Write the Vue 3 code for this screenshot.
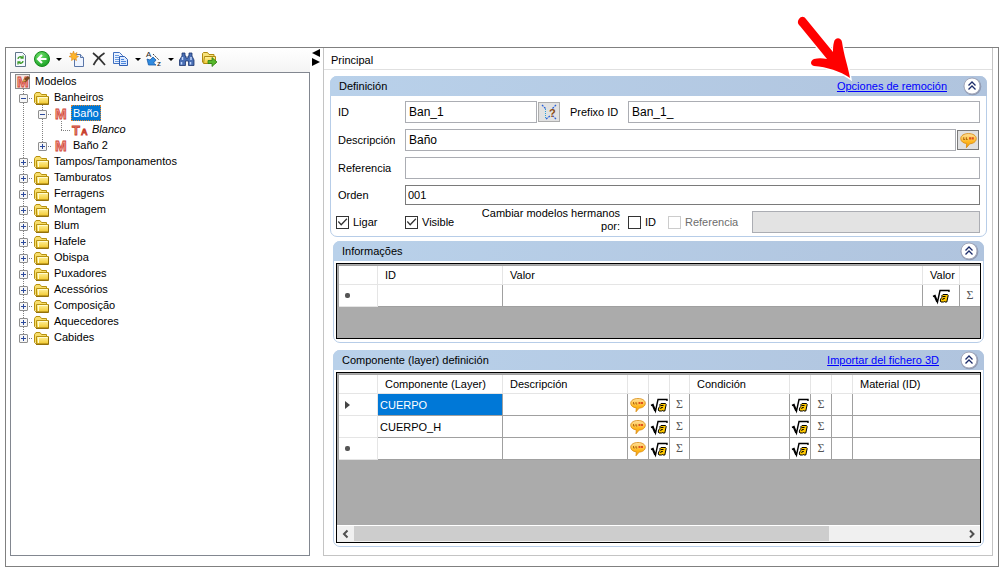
<script setup>
import { ref } from 'vue'

const tree = [
  { label: 'Modelos', icon: 'root', cells: [] },
  { label: 'Banheiros', icon: 'folder', cells: ['minus'] },
  { label: 'Baño', icon: 'model', cells: ['line', 'minus'], selected: true },
  { label: 'Blanco', icon: 'text', cells: ['line', 'line', 'end'], italic: true },
  { label: 'Baño 2', icon: 'model', cells: ['line', 'plus-end'] },
  { label: 'Tampos/Tamponamentos', icon: 'folder', cells: ['plus'] },
  { label: 'Tamburatos', icon: 'folder', cells: ['plus'] },
  { label: 'Ferragens', icon: 'folder', cells: ['plus'] },
  { label: 'Montagem', icon: 'folder', cells: ['plus'] },
  { label: 'Blum', icon: 'folder', cells: ['plus'] },
  { label: 'Hafele', icon: 'folder', cells: ['plus'] },
  { label: 'Obispa', icon: 'folder', cells: ['plus'] },
  { label: 'Puxadores', icon: 'folder', cells: ['plus'] },
  { label: 'Acessórios', icon: 'folder', cells: ['plus'] },
  { label: 'Composição', icon: 'folder', cells: ['plus'] },
  { label: 'Aquecedores', icon: 'folder', cells: ['plus'] },
  { label: 'Cabides', icon: 'folder', cells: ['plus-end'] }
]

const layers = [
  { name: 'CUERPO', mark: 'current', selected: true },
  { name: 'CUERPO_H', mark: '' },
  { name: '', mark: 'new' }
]

const id = ref('Ban_1')
const prefix = ref('Ban_1_')
const description = ref('Baño')
const reference = ref('')
const order = ref('001')
const link = ref(true)
const visible = ref(true)
const byId = ref(false)
</script>

<template>
  <svg class="defs" aria-hidden="true">
    <defs>
      <linearGradient id="gold" x1="0" y1="0" x2="0" y2="1">
        <stop offset="0" stop-color="#fff3a0" />
        <stop offset="1" stop-color="#f2c930" />
      </linearGradient>
      <linearGradient id="amber" x1="0" y1="0" x2="0" y2="1">
        <stop offset="0" stop-color="#ffe2a0" />
        <stop offset="0.6" stop-color="#ffb61c" />
        <stop offset="1" stop-color="#f5a000" />
      </linearGradient>
      <radialGradient id="green" cx="0.4" cy="0.3" r="0.8">
        <stop offset="0" stop-color="#6fe06a" />
        <stop offset="1" stop-color="#0f9a1c" />
      </radialGradient>
      <symbol id="balloon" viewBox="0 0 16 16">
        <path d="M8 1.500c4.200 0 7.300 1.900 7.300 4.700S12.500 11 9.200 11.100L6 14.800l.3-3.900C3 10.500.7 8.800.7 6.200.7 3.400 3.800 1.500 8 1.500z" fill="url(#amber)" stroke="#d98a10" stroke-width=".8" />
        <path d="M3.500 5v2h1.200M6 5v2h1.200" fill="none" stroke="#b06a10" />
        <path d="M8.500 6h2M11 6h2" stroke="#e0501c" stroke-width="2" />
      </symbol>
      <symbol id="root-a" viewBox="0 0 18 18">
        <path d="M1 9.500l2-1L5.500 15 8 3.500h9V5" fill="none" stroke="#000" stroke-width="1.400" />
        <path d="M2.500 9l2.500 6" fill="none" stroke="#000" stroke-width="1.600" />
        <path d="M9.500 9l1.500-1.500h4.500l.7 1-1.400 6.500h-2l-.3-.5-1 .5H9l-.7-1 .5-2.500L10.500 10z" fill="#ffc800" stroke="#000" />
        <path d="M11 9.500h2.500M10.700 13l.5-1.500h1.600" fill="none" stroke="#000" />
      </symbol>
      <symbol id="chevrons" viewBox="0 0 20 20">
        <circle cx="10.500" cy="10.500" r="8.800" fill="#7d849c" opacity=".7" />
        <circle cx="10" cy="10" r="8" fill="#fff" stroke="#a4a9bc" />
        <path d="M6.500 9.500L10 6l3.500 3.500M6.500 13.500L10 10l3.500 3.500" fill="none" stroke="#1c2c6a" stroke-width="1.300" />
      </symbol>
      <symbol id="folder" viewBox="0 0 17 16">
        <path d="M1.500 12.500v-8L3 2.500h4l1.500 2h5v3" fill="#f7dd6a" stroke="#b8920f" />
        <path d="M3.500 13.500v-7h12v7.200H3L1.500 12.500" fill="url(#gold)" stroke="#b8920f" />
        <path d="M5.500 13V7.500h9" fill="none" stroke="#fffbd0" />
        <path d="M15.500 7v7.500H3" fill="none" stroke="#94700a" />
      </symbol>
    </defs>
  </svg>

  <div class="window">
    <aside class="side">
      <div class="toolbar">
        <button class="tool" aria-label="Actualizar">
          <svg width="18" height="18" viewBox="0 0 18 18">
            <path d="M4.500 2.500h7l3 3v11h-10z" fill="#f4f8ff" stroke="#5f7488" />
            <path d="M7 9c0-2 3-3 4-1.500M12 5.500V8H9.500M12 11c0 2-3 3-4 1.500M7 14.500V12h2.500" fill="none" stroke="#3c9a28" stroke-width="1.300" />
          </svg>
        </button>
        <button class="tool wide back" aria-label="Atrás">
          <svg width="18" height="18" viewBox="0 0 18 18">
            <circle cx="9" cy="9" r="7.500" fill="url(#green)" stroke="#168a1c" />
            <path d="M13.500 9H5.500M9 5L5 9l4 4" fill="none" stroke="#fff" stroke-width="2.200" />
          </svg>
          <i class="caret"></i>
        </button>
        <button class="tool" aria-label="Nuevo">
          <svg width="18" height="18" viewBox="0 0 18 18">
            <path d="M6.500 4.500h6l3 3v9h-9z" fill="#eef4ff" stroke="#5a76a8" />
            <path d="M12.500 4.500v3h3" fill="#cfdcf2" stroke="#5a76a8" />
            <path d="M5.500 1l1 3 2.500-1.500L8 5.500l2.500 1L8 8l.5 2.500-2.500-1.500-2.500 1.500.3-3L1 6.500l2.500-1L2 3l2.500.8z" fill="#ffb528" stroke="#d8841c" stroke-width=".6" />
          </svg>
        </button>
        <button class="tool" aria-label="Eliminar">
          <svg width="18" height="18" viewBox="0 0 18 18">
            <path d="M3 3c4 3 8 7 12 12M14.500 3C10 6 6 10 3.500 15" fill="none" stroke="#333" stroke-width="1.700" />
          </svg>
        </button>
        <button class="tool wide" aria-label="Copiar">
          <svg width="18" height="18" viewBox="0 0 18 18">
            <path d="M1.500 2.500h6l3 3v8h-9z" fill="#eaf2ff" stroke="#3f6fc0" />
            <path d="M3 5.500h4M3 7.500h5M3 9.500h5M3 11.500h5" stroke="#6a9be0" />
            <path d="M7.500 6.500h5l3 3v6h-8z" fill="#dbe9ff" stroke="#2f5fb4" />
            <path d="M9 9.500h3M9 11.500h5M9 13.500h5" stroke="#4c86dc" />
          </svg>
          <i class="caret"></i>
        </button>
        <button class="tool wide" aria-label="Ordenar">
          <svg width="18" height="18" viewBox="0 0 18 18">
            <text x="1" y="7" class="tiny">A</text>
            <text x="12" y="16" class="tiny">z</text>
            <path d="M8 4l6 6" stroke="#444" stroke-dasharray="2 1" />
            <path d="M2 9l3 1 3-3 3 3-2.500 3L11 15H3.500z" fill="#2f8be0" stroke="#1a5ca8" stroke-width=".8" />
          </svg>
          <i class="caret"></i>
        </button>
        <button class="tool" aria-label="Buscar">
          <svg width="18" height="18" viewBox="0 0 18 18">
            <path d="M4 3h3v3h1v2h2V6h1V3h3v3l2 4v5.500h-5.500V11h-3v4.500H1.500V10L4 6z" fill="#4a6fb4" stroke="#1c356e" stroke-width=".8" />
            <path d="M4.500 7v3M3.500 12v2.500M13 7v3M12.500 12v2.500" stroke="#c4d8fc" stroke-width="1.500" />
          </svg>
        </button>
        <button class="tool" aria-label="Mover a carpeta">
          <svg width="18" height="18" viewBox="0 0 18 18">
            <path d="M2.500 12.500v-9l1-1h4l1.500 2h5v3" fill="#f7e27a" stroke="#b08a10" />
            <path d="M4.500 6.500h11v7h-12z" fill="url(#gold)" stroke="#b08a10" />
            <path d="M8 10.500h4v-3l5 4.500-5 4.500v-3H8z" fill="#56b82c" stroke="#2f7d14" stroke-width=".8" />
          </svg>
        </button>
      </div>

      <ul class="tree">
        <li v-for="node in tree" :key="node.label" class="node">
          <svg v-for="(cell, i) in node.cells" :key="i" width="19" height="16" viewBox="0 0 19 16">
            <path v-if="cell.endsWith('end')" d="M9.500 0v9" class="dots" />
            <path v-else d="M9.500 0v16" class="dots" />
            <path v-if="cell !== 'line'" d="M9 9.500h10" class="dots" />
            <template v-if="cell.startsWith('plus') || cell === 'minus'">
              <rect x="5.500" y="5.500" width="8" height="8" rx=".5" fill="#f6f6f6" stroke="#8f8f8f" />
              <path d="M7 9.500h5" stroke="#2c4a9c" />
              <path v-if="cell !== 'minus'" d="M9.500 7v5" stroke="#2c4a9c" />
            </template>
          </svg>
          <span class="pic">
            <svg v-if="node.icon === 'folder'" width="17" height="16"><use href="#folder" /></svg>
            <svg v-else-if="node.icon === 'root'" width="17" height="16" viewBox="0 0 17 16">
              <rect x="1.500" y=".5" width="14" height="14" fill="#f2e6e2" stroke="#8b8b8b" />
              <text x="3" y="13" class="m-glyph">M</text>
              <path d="M8 8l2-3 4-3 2 2-4 4z" fill="#7a4a20" />
              <path d="M8 8l2-3 2 2z" fill="#e8a850" />
            </svg>
            <svg v-else-if="node.icon === 'model'" width="17" height="16" viewBox="0 0 17 16">
              <text x="3" y="13" class="m-glyph">M</text>
            </svg>
            <svg v-else width="17" height="16" viewBox="0 0 17 16">
              <text x="1" y="13" class="t-glyph">T</text>
              <text x="10" y="13" class="t-glyph small">A</text>
            </svg>
          </span>
          <span class="name" :class="{ selected: node.selected, italic: node.italic }">{{ node.label }}</span>
        </li>
      </ul>
    </aside>

    <div class="splitter" aria-hidden="true">
      <svg width="13" height="18" viewBox="0 0 13 18">
        <path d="M10 0v8L2 4z M2 9v8l8-4z" fill="#000" />
      </svg>
    </div>

    <main class="main">
      <h1 class="tab">Principal</h1>

      <div class="cards">
        <section class="card first">
          <header class="bar">
            <h2>Definición</h2>
            <a href="#remocion">Opciones de remoción</a>
            <button class="fold" aria-label="Contraer"><svg width="20" height="20"><use href="#chevrons" /></svg></button>
          </header>
          <div class="form">
            <div class="row">
              <label class="lab" for="f-id">ID</label>
              <input id="f-id" v-model="id" class="box id-box" type="text" />
              <button class="side-btn" aria-label="Sugerir ID">
                <svg width="18" height="18" viewBox="0 0 18 18">
                  <path d="M2 2l4 4M16 2l-4 4M16 16l-3-3M6 16l4-3" stroke="#2a62d8" stroke-width="1.300" stroke-dasharray="2 1" />
                  <path d="M5.500 6v9" stroke="#2aa0d8" stroke-dasharray="1 1" />
                  <text x="9" y="14" class="question">?</text>
                </svg>
              </button>
              <label class="prefix" for="f-prefix">Prefixo ID</label>
              <input id="f-prefix" v-model="prefix" class="box grow" type="text" />
            </div>
            <div class="row">
              <label class="lab" for="f-desc">Descripción</label>
              <input id="f-desc" v-model="description" class="box grow" type="text" />
              <button class="side-btn framed" aria-label="Traducciones"><svg width="17" height="17"><use href="#balloon" /></svg></button>
            </div>
            <div class="row">
              <label class="lab" for="f-ref">Referencia</label>
              <input id="f-ref" v-model="reference" class="box grow" type="text" />
            </div>
            <div class="row">
              <label class="lab" for="f-order">Orden</label>
              <input id="f-order" v-model="order" class="box grow order" type="text" />
            </div>
            <div class="row checks">
              <label class="check link"><input v-model="link" type="checkbox" />Ligar</label>
              <label class="check shown"><input v-model="visible" type="checkbox" />Visible</label>
              <span class="siblings">Cambiar modelos hermanos por:</span>
              <label class="check by-id"><input v-model="byId" type="checkbox" />ID</label>
              <label class="check by-ref"><input type="checkbox" disabled />Referencia</label>
              <input class="box grow" type="text" disabled aria-label="Referencia de modelos hermanos" />
            </div>
          </div>
        </section>

        <section class="card">
          <header class="bar">
            <h2>Informações</h2>
            <button class="fold" aria-label="Contraer"><svg width="20" height="20"><use href="#chevrons" /></svg></button>
          </header>
          <div class="grid info">
            <table>
              <colgroup>
                <col class="w39" /><col class="w125" /><col /><col class="w37" /><col class="w20" />
              </colgroup>
              <thead>
                <tr><th></th><th>ID</th><th>Valor</th><th>Valor</th><th></th></tr>
              </thead>
              <tbody>
                <tr>
                  <td class="head"><i class="star"></i></td>
                  <td></td>
                  <td></td>
                  <td class="mid"><svg width="18" height="18"><use href="#root-a" /></svg></td>
                  <td class="mid sum">Σ</td>
                </tr>
              </tbody>
            </table>
          </div>
        </section>

        <section class="card fill">
          <header class="bar">
            <h2>Componente (layer) definición</h2>
            <a href="#importar">Importar del fichero 3D</a>
            <button class="fold" aria-label="Contraer"><svg width="20" height="20"><use href="#chevrons" /></svg></button>
          </header>
          <div class="grid">
            <table>
              <colgroup>
                <col class="w39" /><col class="w125" /><col class="w125" /><col class="w21" /><col class="w21" /><col class="w20" />
                <col class="w100" /><col class="w21" /><col class="w21" /><col class="w21" /><col />
              </colgroup>
              <thead>
                <tr>
                  <th></th><th>Componente (Layer)</th><th>Descripción</th><th></th><th></th><th></th>
                  <th>Condición</th><th></th><th></th><th></th><th>Material (ID)</th>
                </tr>
              </thead>
              <tbody>
                <tr v-for="layer in layers" :key="layer.name">
                  <td class="head">
                    <i v-if="layer.mark === 'current'" class="current"></i>
                    <i v-if="layer.mark === 'new'" class="star"></i>
                  </td>
                  <td :class="{ selected: layer.selected }">{{ layer.name }}</td>
                  <td></td>
                  <td class="mid"><svg width="16" height="16"><use href="#balloon" /></svg></td>
                  <td class="mid"><svg width="18" height="18"><use href="#root-a" /></svg></td>
                  <td class="mid sum">Σ</td>
                  <td></td>
                  <td class="mid"><svg width="18" height="18"><use href="#root-a" /></svg></td>
                  <td class="mid sum">Σ</td>
                  <td></td>
                  <td></td>
                </tr>
              </tbody>
            </table>
            <div class="scroll">
              <button class="arrow" aria-label="Izquierda">
                <svg width="17" height="16" viewBox="0 0 17 16"><path d="M10.500 4.500L7 8l3.500 3.500" /></svg>
              </button>
              <div class="track"><div class="thumb"></div></div>
              <button class="arrow" aria-label="Derecha">
                <svg width="17" height="16" viewBox="0 0 17 16"><path d="M7 4.500L10.500 8 7 11.500" /></svg>
              </button>
            </div>
          </div>
        </section>
      </div>
    </main>

    <svg class="pointer" width="64" height="70" viewBox="0 0 64 70" aria-hidden="true">
      <path d="M5 6C3 9 4 11 6 13L33 46C28 45 24 45 20 46C16 48 16 52 20 53C33 54 46 58 56 65C54 53 50 43 48 29C47 24 41 24 40 29C39 32 39 36 39 39L12 6C10 3 7 3 5 6z" fill="red" stroke="#fff" stroke-width="3" paint-order="stroke" />
    </svg>
  </div>
</template>

<style>
body {
  background: #fff;
}
</style>

<style scoped>
.defs {
  position: absolute;
  width: 0;
  height: 0;
}

.window,
.window * {
  box-sizing: border-box;
}

.window {
  position: relative;
  display: flex;
  min-height: calc(100vh - 54px);
  margin: 47px 3px 7px 5px;
  padding: 0 5px 10px 4px;
  border: 1px solid #808080;
  font: 11px/16px "Liberation Sans", Arial, sans-serif;
  color: #000;
}

.window svg {
  display: block;
  flex: none;
}

button {
  padding: 0;
  border: 0;
  background: none;
  font: inherit;
}

.side {
  display: flex;
  flex: 0 0 300px;
  flex-direction: column;
}

.toolbar {
  display: flex;
  align-items: center;
  gap: 4px;
  height: 24px;
  padding: 0 1px 2px;
  background: linear-gradient(#fff, #f4f4f4);
}

.tool {
  display: flex;
  align-items: center;
}

.tool.wide {
  gap: 5px;
}

.tool.back {
  margin-right: 2px;
}

.caret {
  border: 3px solid transparent;
  border-top-color: #000;
  border-bottom: 0;
}

.tree {
  flex: 1;
  margin: 0;
  padding: 0 3px;
  border: 1px solid #828790;
  background: #fff;
  list-style: none;
}

.node {
  display: flex;
  height: 16px;
}

.dots {
  fill: none;
  stroke: #808080;
  stroke-dasharray: 1 1;
}

.pic {
  width: 19px;
  padding-top: 1px;
}

.name {
  padding: 0 2px;
}

.name.selected {
  outline: 1px dotted #e08a30;
  outline-offset: -1px;
  background: #0078d7;
  color: #fff;
}

.name.italic {
  font-style: italic;
}

.m-glyph {
  fill: #f6a496;
  stroke: #d0483c;
  stroke-width: 0.8px;
  font: bold 14px "Liberation Sans", Arial, sans-serif;
}

.t-glyph {
  fill: #e88a80;
  stroke: #c8402c;
  stroke-width: 0.8px;
  font: bold 13px "Liberation Sans", Arial, sans-serif;
}

.t-glyph.small {
  font-size: 9px;
}

.tiny {
  fill: #222;
  font: 8px "Liberation Sans", Arial, sans-serif;
}

.question {
  fill: #8a4a10;
  font: bold 11px "Liberation Sans", Arial, sans-serif;
}

.splitter {
  flex: 0 0 13px;
  padding-top: 1px;
}

.main {
  display: flex;
  flex: 1;
  flex-direction: column;
  min-width: 0;
  border: 1px solid #c4c4c4;
  border-top: 0;
}

.tab {
  height: 22px;
  margin: 0;
  padding: 4px 7px;
  border-bottom: 1px solid #e0e0e0;
  font-size: 11px;
  font-weight: normal;
}

.cards {
  display: flex;
  flex: 1;
  flex-direction: column;
  padding: 6px 5px 8px 6px;
}

.card {
  margin: 0 3px 7px;
  border: 1px solid #b7cde8;
  border-radius: 7px;
}

.card.first {
  margin: 0 0 4px;
}

.card.fill {
  display: flex;
  flex: 1;
  flex-direction: column;
  margin-bottom: 0;
}

.bar {
  display: flex;
  align-items: center;
  height: 20px;
  margin: -1px -1px 0;
  padding: 0 5px 0 9px;
  border-radius: 7px 7px 0 0;
  background: linear-gradient(90deg, #b9d1ea, #b0c4de);
}

.bar h2 {
  flex: 1;
  margin: 0;
  font-size: 11px;
  font-weight: normal;
}

.bar a {
  margin-right: 20px;
  color: #00f;
}

.first .bar a {
  margin-right: 15px;
}

.fold {
  height: 20px;
}

.form {
  display: flex;
  flex-direction: column;
  gap: 6px;
  padding: 5px 6px 3px 7px;
}

.row {
  display: flex;
  align-items: center;
}

.lab {
  flex: 0 0 67px;
}

.box {
  min-width: 0;
  height: 22px;
  padding: 0 3px;
  border: 1px solid #abadb3;
  border-radius: 0;
  background: #fff;
  color: #000;
  font: 12px "Liberation Sans", Arial, sans-serif;
}

.box.grow {
  flex: 1;
}

.box.id-box {
  width: 132px;
}

.box.order {
  height: 20px;
  padding: 0 2px;
  border-color: #7a7a7a;
  font-size: 11px;
}

.box:disabled {
  background: #e3e3e3;
}

.side-btn {
  display: grid;
  place-items: center;
  width: 22px;
  height: 20px;
  margin-left: 1px;
  border: 1px solid #adadad;
  background: #e1e1e1;
}

.side-btn.framed {
  margin-right: 1px;
  border-color: #7a7a7a;
}

.prefix {
  flex: 0 0 58px;
  margin-left: 10px;
}

.check {
  display: flex;
  flex: none;
  align-items: center;
  gap: 4px;
}

.check input {
  width: 13px;
  height: 13px;
  margin: 0;
  border: 1px solid #333;
  background: #fff;
  appearance: none;
}

.check input:checked::before {
  display: block;
  height: 11px;
  background: #333;
  clip-path: polygon(8% 50%, 16% 42%, 38% 66%, 86% 16%, 94% 24%, 38% 84%);
  content: "";
}

.check input:disabled {
  border-color: #ccc;
}

.checks {
  height: 22px;
  margin-left: -2px;
}

.link {
  width: 69px;
}

.shown {
  width: 66px;
}

.siblings {
  width: 149px;
  margin-right: 8px;
  margin-bottom: 4px;
  line-height: 13px;
  text-align: right;
}

.by-id {
  width: 40px;
}

.by-ref {
  width: 84px;
  color: #6d6d6d;
}

.grid {
  display: flex;
  flex: 1;
  flex-direction: column;
  margin: 2px;
  padding: 1px 0 0 1px;
  border: 1px solid #000;
  background: #ababab;
}

.card.fill .grid {
  margin-bottom: 3px;
}

.grid.info {
  min-height: 76px;
  margin-bottom: 3px;
}

table {
  width: 100%;
  border-top: 1px solid #a0a0a0;
  border-left: 1px solid #a0a0a0;
  border-spacing: 0;
  background: #fff;
  table-layout: fixed;
}

th {
  height: 19px;
  padding: 0 0 0 7px;
  border-right: 1px solid #e5e5e5;
  border-bottom: 1px solid #e5e5e5;
  font-weight: normal;
  line-height: 16px;
  text-align: left;
  white-space: nowrap;
}

td {
  height: 22px;
  padding: 0 0 0 2px;
  border-right: 1px solid #a0a0a0;
  border-bottom: 1px solid #a0a0a0;
}

td:last-child,
th:last-child {
  border-right: 0;
}

td.head {
  padding: 0 0 0 6px;
  border-color: #e5e5e5;
}

td.mid {
  padding: 0;
  text-align: center;
}

td.mid svg {
  margin: 0 auto;
}

td.sum {
  color: #555;
  font: 12px "Liberation Serif", serif;
}

td.selected {
  background: #0078d7;
  color: #fff;
}

.w20 {
  width: 20px;
}

.w21 {
  width: 21px;
}

.w37 {
  width: 37px;
}

.w39 {
  width: 39px;
}

.w100 {
  width: 100px;
}

.w125 {
  width: 125px;
}

.star {
  display: block;
  width: 5px;
  height: 5px;
  border-radius: 2px;
  background: #555;
}

.current {
  display: block;
  width: 0;
  border: 4px solid transparent;
  border-right: 0;
  border-left: 5px solid #444;
}

.scroll {
  display: flex;
  height: 17px;
  margin-top: auto;
  margin-left: -1px;
  border-top: 1px solid #fff;
  background: #f0f0f0;
}

.track {
  flex: 1;
}

.thumb {
  width: 78%;
  height: 15px;
  background: #cdcdcd;
}

.arrow path {
  fill: none;
  stroke: #505050;
  stroke-width: 2px;
}

.pointer {
  position: absolute;
  top: -35px;
  right: 140px;
}
</style>
